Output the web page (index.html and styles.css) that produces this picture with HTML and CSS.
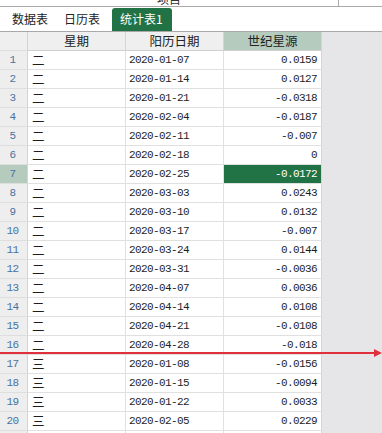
FILE: index.html
```html
<!DOCTYPE html>
<html lang="zh-CN">
<head>
<meta charset="utf-8">
<link rel="stylesheet" href="styles.css">
</head>
<body>
<div class="sheet">
  <div class="topstrip"><span class="prev-text">项目</span><span class="prev-tick"></span></div>
  <div class="tabbar">
    <span class="tab">数据表</span>
    <span class="tab">日历表</span>
    <span class="tab active">统计表1</span>
  </div>
  <div class="grid">
    <div class="c rh hd"></div><div class="c hd">星期</div><div class="c hd">阳历日期</div><div class="c hd sel">世纪星源</div><div class="c rest"></div>
    <div class="c rh">1</div><div class="c wk">二</div><div class="c dt">2020-01-07</div><div class="c num">0.0159</div><div class="c rest"></div>
    <div class="c rh">2</div><div class="c wk">二</div><div class="c dt">2020-01-14</div><div class="c num">0.0127</div><div class="c rest"></div>
    <div class="c rh">3</div><div class="c wk">二</div><div class="c dt">2020-01-21</div><div class="c num">-0.0318</div><div class="c rest"></div>
    <div class="c rh">4</div><div class="c wk">二</div><div class="c dt">2020-02-04</div><div class="c num">-0.0187</div><div class="c rest"></div>
    <div class="c rh">5</div><div class="c wk">二</div><div class="c dt">2020-02-11</div><div class="c num">-0.007</div><div class="c rest"></div>
    <div class="c rh">6</div><div class="c wk">二</div><div class="c dt">2020-02-18</div><div class="c num">0</div><div class="c rest"></div>
    <div class="c rh rsel">7</div><div class="c wk">二</div><div class="c dt">2020-02-25</div><div class="c num active">-0.0172</div><div class="c rest"></div>
    <div class="c rh">8</div><div class="c wk">二</div><div class="c dt">2020-03-03</div><div class="c num">0.0243</div><div class="c rest"></div>
    <div class="c rh">9</div><div class="c wk">二</div><div class="c dt">2020-03-10</div><div class="c num">0.0132</div><div class="c rest"></div>
    <div class="c rh">10</div><div class="c wk">二</div><div class="c dt">2020-03-17</div><div class="c num">-0.007</div><div class="c rest"></div>
    <div class="c rh">11</div><div class="c wk">二</div><div class="c dt">2020-03-24</div><div class="c num">0.0144</div><div class="c rest"></div>
    <div class="c rh">12</div><div class="c wk">二</div><div class="c dt">2020-03-31</div><div class="c num">-0.0036</div><div class="c rest"></div>
    <div class="c rh">13</div><div class="c wk">二</div><div class="c dt">2020-04-07</div><div class="c num">0.0036</div><div class="c rest"></div>
    <div class="c rh">14</div><div class="c wk">二</div><div class="c dt">2020-04-14</div><div class="c num">0.0108</div><div class="c rest"></div>
    <div class="c rh">15</div><div class="c wk">二</div><div class="c dt">2020-04-21</div><div class="c num">-0.0108</div><div class="c rest"></div>
    <div class="c rh">16</div><div class="c wk">二</div><div class="c dt">2020-04-28</div><div class="c num">-0.018</div><div class="c rest"></div>
    <div class="c rh">17</div><div class="c wk">三</div><div class="c dt">2020-01-08</div><div class="c num">-0.0156</div><div class="c rest"></div>
    <div class="c rh">18</div><div class="c wk">三</div><div class="c dt">2020-01-15</div><div class="c num">-0.0094</div><div class="c rest"></div>
    <div class="c rh">19</div><div class="c wk">三</div><div class="c dt">2020-01-22</div><div class="c num">0.0033</div><div class="c rest"></div>
    <div class="c rh">20</div><div class="c wk">三</div><div class="c dt">2020-02-05</div><div class="c num">0.0229</div><div class="c rest"></div>
    <div class="c rh"></div><div class="c wk"></div><div class="c dt"></div><div class="c num"></div><div class="c rest"></div>
  </div>
  <div class="arrow" aria-hidden="true">
    <svg width="382" height="10" viewBox="0 0 382 10"><line x1="0" y1="5" x2="375" y2="5" stroke="#e0303c" stroke-width="2"/><polygon points="374,1 382,5 374,9" fill="#e0303c"/></svg>
  </div>
</div>
</body>
</html>
```
FILE: styles.css
```css
* { box-sizing: border-box; }
html, body { margin: 0; padding: 0; background: #ffffff; }
body { width: 382px; height: 433px; overflow: hidden; }
.sheet { position: relative; width: 382px; height: 433px; overflow: hidden; font-family: "Noto Sans CJK SC", sans-serif; font-size: 12px; color: #1e1e1e; }
.topstrip { height: 7px; border-bottom: 1px solid #a9a9a9; display: flex; align-items: flex-end; overflow: hidden; position: relative; }
.prev-text { margin-left: 157px; line-height: 13px; height: 13px; margin-bottom: 1px; color: #333; font-size: 12px; }
.prev-tick { margin-left: 157px; width: 1px; height: 6px; background: #a9a9a9; align-self: flex-start; }
.tabbar { height: 25px; border-bottom: 1px solid #a8a8a8; display: flex; align-items: flex-end; padding-left: 4px; }
.tab { height: 23px; line-height: 22px; padding: 0 8px; color: #222; font-size: 12px; }
.tab.active { background: #217346; color: #ffffff; border-radius: 3px 3px 0 0; padding: 0 9px 0 8px; margin-left: 4px; }
.grid { display: grid; grid-template-columns: 28px 98px 98px 98px 1fr; grid-auto-rows: 19px; }
.c { border-right: 1px solid #e0e0e0; border-bottom: 1px solid #e0e0e0; line-height: 18px; white-space: nowrap; overflow: hidden; }
.hd { background: #efefef; text-align: center; border-right-color: #d4d4d4; border-bottom-color: #d0d0d0; font-size: 12.5px; color: #222; }
.hd.sel { background: #b5cbbe; }
.rh { background: #eeeeee; border-right-color: #d4d4d4; border-bottom-color: #dedede; text-align: center; padding-right: 2px; color: #4a72a0; font-family: "Liberation Mono", monospace; font-size: 11px; letter-spacing: -0.6px; }
.rh.rsel { background: #b5cbbe; }
.rh.hd { background: #efefef; }
.wk { padding-left: 4px; font-size: 12.5px; }
.dt { padding-left: 3px; font-family: "Liberation Mono", monospace; font-size: 11px; letter-spacing: -0.6px; color: #1e1e1e; }
.num { text-align: right; padding-right: 4px; font-family: "Liberation Mono", monospace; font-size: 11px; letter-spacing: -0.6px; color: #1e1e1e; border-right-color: #d6d6d6; }
.num.active { background: #217346; color: #ffffff; }
.rest { background: #e6e6e8; border: none; }
.arrow { position: absolute; left: 0; top: 348px; width: 382px; height: 10px; line-height: 0; }
```
